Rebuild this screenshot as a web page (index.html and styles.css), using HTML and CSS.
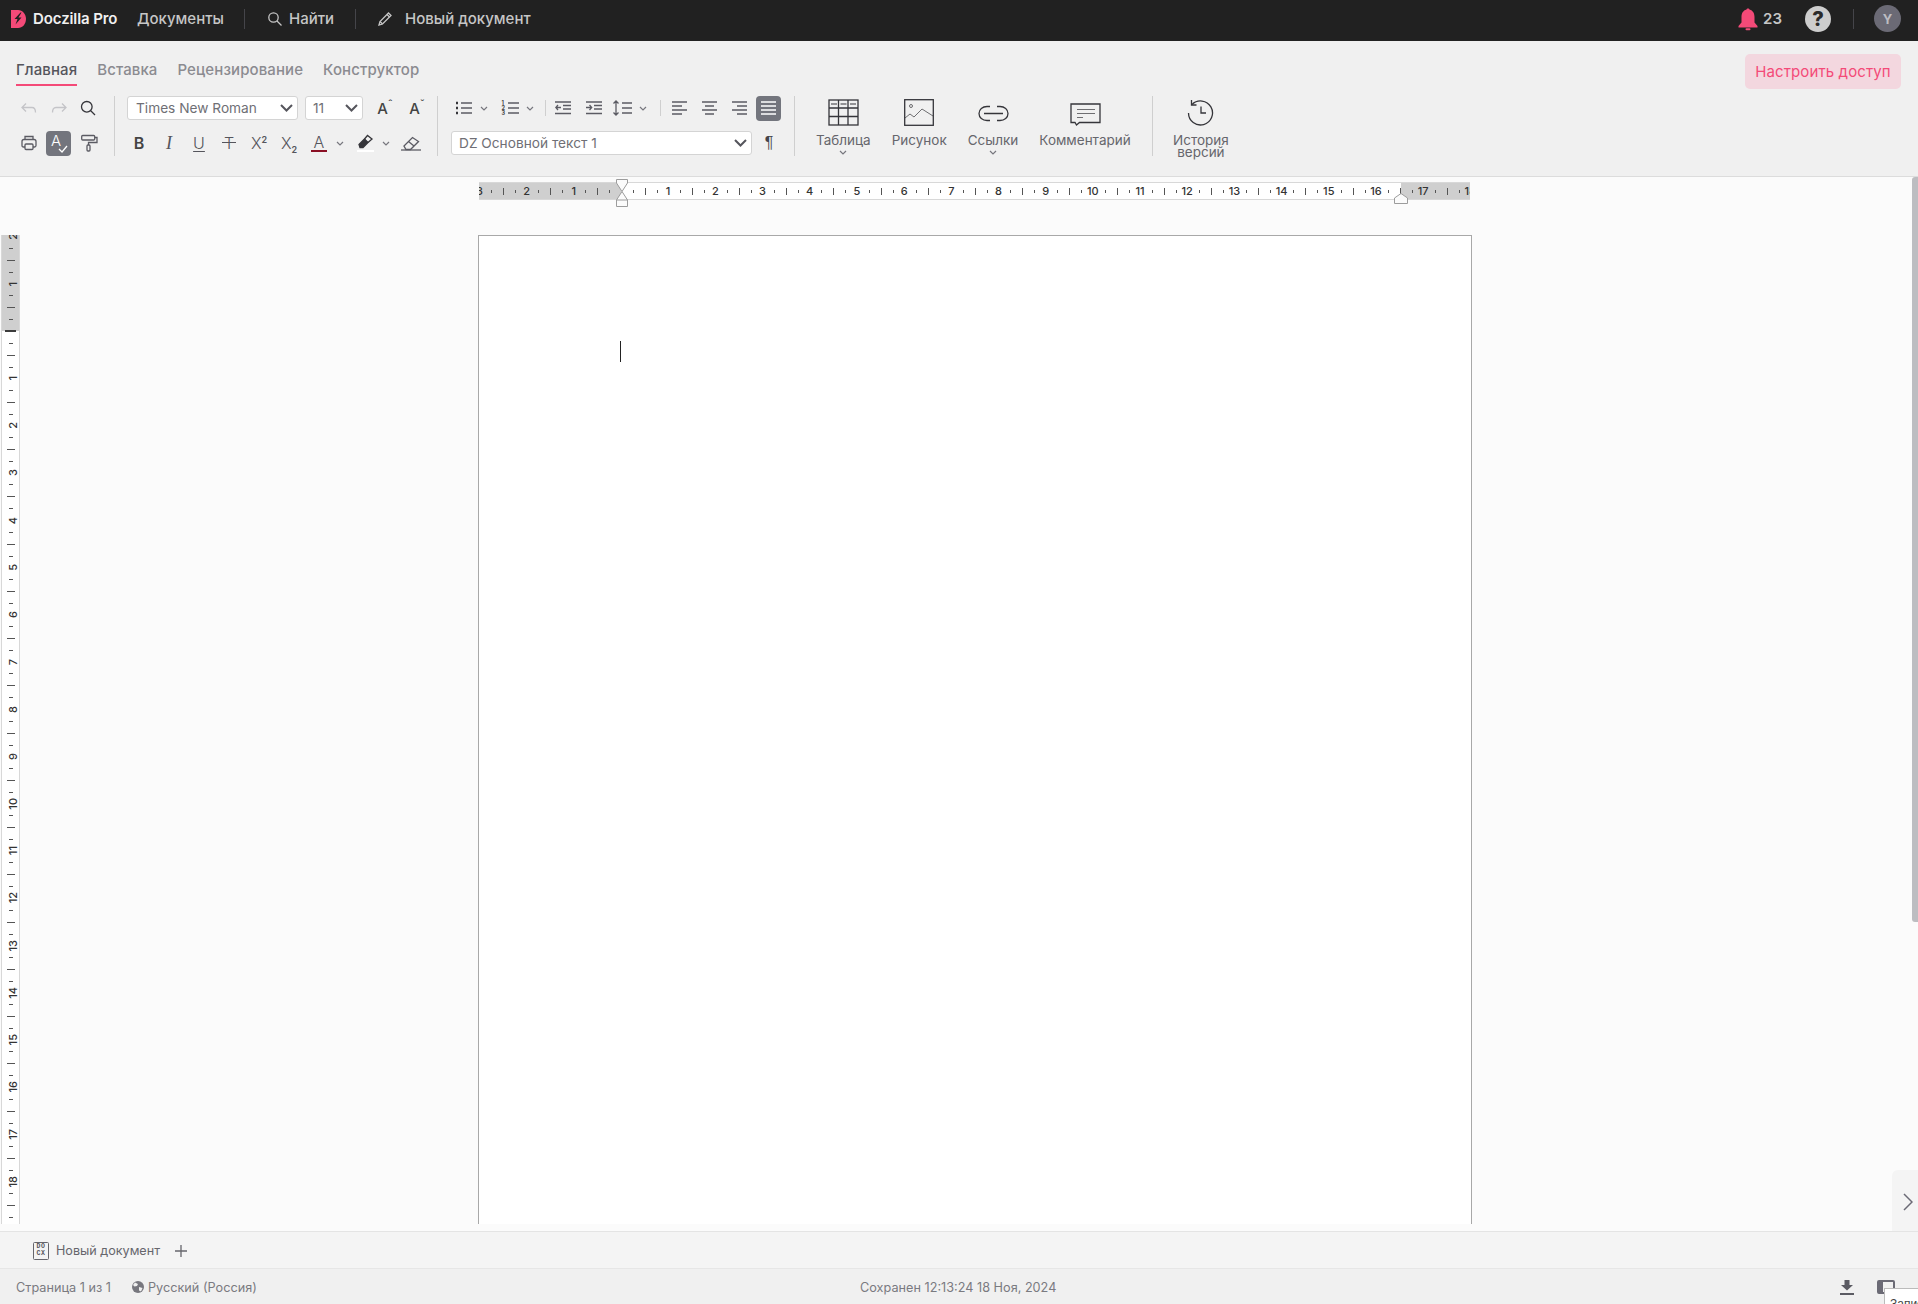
FILE: index.html
```html
<!DOCTYPE html>
<html lang="ru">
<head>
<meta charset="utf-8">
<title>Новый документ</title>
<link rel="stylesheet" href="styles.css">
</head>
<body>
<div class="app">
  <header class="topbar">
    <svg class="logo" width="15" height="18" viewBox="0 0 15 18"><path class="logo-d" d="M0 0H7C11.500 0 15 4 15 9S11.500 18 7 18H0Z"/><path class="logo-bolt" d="M9.500 2.500 3.500 9H6.500L4.500 14.500 10.500 7.500H7.500L10.500 2.500Z"/></svg>
    <span class="brand">Doczilla Pro</span>
    <span class="top-link docs">Документы</span>
    <span class="top-sep sep-a"></span>
    <svg class="top-search ic" width="16" height="16" viewBox="0 0 16 16"><circle cx="6.500" cy="6.500" r="4.700"/><path d="M10 10 14.500 14.500"/></svg>
    <span class="top-link find">Найти</span>
    <span class="top-sep sep-b"></span>
    <svg class="top-pencil ic" width="16" height="16" viewBox="0 0 16 16"><path d="M2 14 3 10.500 11.500 2 14 4.500 5.500 13Z"/><path d="M10 3.500 12.500 6M3 10.500 5.500 13"/></svg>
    <span class="top-link newdoc">Новый документ</span>
    <div class="top-right">
      <svg class="bell" width="20" height="24" viewBox="0 0 20 24"><path d="M8.500 2.500C8.500 1 11.500 1 11.500 2.500 15 3.500 16.500 6.500 16.500 10V15.500L19.500 19V20.500H.5V19L3.500 15.500V10C3.500 6.500 5 3.500 8.500 2.500Z"/><rect x="7.500" y="21.300" width="5" height="2" rx="1"/></svg>
      <span class="count">23</span>
      <span class="help">?</span>
      <span class="top-sep sep-c"></span>
      <span class="avatar">Y</span>
    </div>
  </header>

  <section class="ribbon">
    <div class="ribbon-head">
      <nav class="tabs">
        <span class="tab active">Главная</span>
        <span class="tab">Вставка</span>
        <span class="tab">Рецензирование</span>
        <span class="tab">Конструктор</span>
      </nav>
      <button class="share">Настроить доступ</button>
    </div>
    <div class="toolbar">
      <div class="group g1">
        <div class="row r-hist1">
          <span class="cell faint"><svg class="ic" width="16" height="12" viewBox="0 0 16 12"><path d="M5 1.500 1 5.500 5 9.500M1 5.500H11C13.500 5.500 14.500 7.500 14.500 10.500"/></svg></span>
          <span class="cell faint"><svg class="ic" width="16" height="12" viewBox="0 0 16 12"><path d="M11 1.500 15 5.500 11 9.500M15 5.500H5C2.500 5.500 1.500 7.500 1.500 10.500"/></svg></span>
          <span class="cell"><svg class="ic dark" width="16" height="16" viewBox="0 0 16 16"><circle cx="6.800" cy="6.800" r="5.300"/><path d="M10.500 10.500 15 15"/></svg></span>
        </div>
        <div class="row r-hist2">
          <span class="cell"><svg class="ic" width="16" height="16" viewBox="0 0 16 16"><path d="M4 4.500V1.500H12V4.500M4 12H2.500C1.500 12 1 11.500 1 10.500V6.500C1 5.500 1.500 4.500 3 4.500H13C14.500 4.500 15 5.500 15 6.500V10.500C15 11.500 14.500 12 13.500 12H12"/><rect x="4" y="9" width="8" height="5.500" rx="1"/></svg></span>
          <span class="cell"><span class="spell"><span class="spell-a">A</span><svg class="ic white" width="10" height="8" viewBox="0 0 10 8"><path d="M1 4 4 7 9 1"/></svg></span></span>
          <span class="cell"><svg class="ic" width="17" height="18" viewBox="0 0 17 18"><rect x=".7" y="1.500" width="13" height="4.500" rx="1"/><path d="M13.700 3.500H16V8.500H7.500V11"/><rect x="6" y="11" width="3" height="6" rx="1"/></svg></span>
        </div>
      </div>
      <span class="vsep"></span>
      <div class="group g2">
        <div class="row r-font">
          <span class="select font-select"><span class="sel-text">Times New Roman</span><svg class="ic sel-chev" width="13" height="8" viewBox="0 0 13 8"><path d="M1 1 6.500 6.500 12 1"/></svg></span>
          <span class="select size-select"><span class="sel-text">11</span><svg class="ic sel-chev" width="13" height="8" viewBox="0 0 13 8"><path d="M1 1 6.500 6.500 12 1"/></svg></span>
          <span class="cell grow"><span>A<small class="caret">ˆ</small></span></span>
          <span class="cell grow"><span>A<small class="caret">ˇ</small></span></span>
        </div>
        <div class="row r-format">
          <span class="cell fmt bold">B</span>
          <span class="cell fmt ital">I</span>
          <span class="cell fmt under">U</span>
          <span class="cell fmt strike">T</span>
          <span class="cell fmt thin"><span>X<sup>2</sup></span></span>
          <span class="cell fmt thin"><span>X<sub>2</sub></span></span>
          <span class="cell fmt thin"><span class="color-a">A</span></span>
          <span class="cell chev-pad"><svg class="ic chev" width="8" height="5" viewBox="0 0 8 5"><path d="M1 1 4 4 7 1"/></svg></span>
          <span class="cell"><svg class="ic dark" width="17" height="18" viewBox="0 0 17 18"><path class="fill" d="M2 10.500 7.500 5 11 8.500 6 13.500H3Z"/><path d="M7.500 5 10.500 1.500 15 5 11 8.500"/><path class="under-bar" d="M0 17H17"/></svg></span>
          <span class="cell"><svg class="ic chev" width="8" height="5" viewBox="0 0 8 5"><path d="M1 1 4 4 7 1"/></svg></span>
          <span class="cell"><svg class="ic" width="20" height="15" viewBox="0 0 20 15"><path d="M3 10 11.500 1.500 17.500 5.500 9.500 13.500H5Z"/><path d="M7.500 5.500 13 10"/><path d="M0 14H20"/></svg></span>
        </div>
      </div>
      <span class="vsep"></span>
      <div class="group g3">
        <div class="row r-para">
          <span class="cell"><svg class="ic" width="17" height="14" viewBox="0 0 17 14"><path class="dots" d="M1 2H3M1 7H3M1 12H3"/><path d="M6 2H17M6 7H17M6 12H17"/></svg></span>
          <span class="cell chev-pad2"><svg class="ic chev" width="8" height="5" viewBox="0 0 8 5"><path d="M1 1 4 4 7 1"/></svg></span>
          <span class="cell"><span class="numlist"><span class="nums">1<br>2<br>3</span><svg class="ic" width="11" height="14" viewBox="0 0 11 14"><path d="M0 2H11M0 7H11M0 12H11"/></svg></span></span>
          <span class="cell"><svg class="ic chev" width="8" height="5" viewBox="0 0 8 5"><path d="M1 1 4 4 7 1"/></svg></span>
          <span class="cell"><span class="mini-sep"></span></span>
          <span class="cell"><svg class="ic" width="16" height="14" viewBox="0 0 16 14"><path d="M0 1H16M8 4.500H16M8 8H16M0 12.500H16M6 6.500H1M3 4 .8 6.500 3 9"/></svg></span>
          <span class="cell"><svg class="ic" width="16" height="14" viewBox="0 0 16 14"><path d="M0 1H16M8 4.500H16M8 8H16M0 12.500H16M0 6.500H5.500M3.500 4 5.700 6.500 3.500 9"/></svg></span>
          <span class="cell"><svg class="ic" width="19" height="16" viewBox="0 0 19 16"><path d="M3 1V15M.5 3.500 3 1 5.500 3.500M.5 12.500 3 15 5.500 12.500M9 3H19M9 8H19M9 13H19"/></svg></span>
          <span class="cell"><svg class="ic chev" width="8" height="5" viewBox="0 0 8 5"><path d="M1 1 4 4 7 1"/></svg></span>
          <span class="cell"><span class="mini-sep"></span></span>
          <span class="cell"><svg class="ic" width="15" height="14" viewBox="0 0 15 14"><path d="M0 1H15M0 5H10M0 9H15M0 13H10"/></svg></span>
          <span class="cell"><svg class="ic" width="15" height="14" viewBox="0 0 15 14"><path d="M0 1H15M3 5H12M0 9H15M3 13H12"/></svg></span>
          <span class="cell"><svg class="ic" width="15" height="14" viewBox="0 0 15 14"><path d="M0 1H15M5 5H15M0 9H15M5 13H15"/></svg></span>
          <span class="cell"><span class="justify"><svg class="ic white" width="15" height="14" viewBox="0 0 15 14"><path d="M0 1H15M0 5H15M0 9H15M0 13H15"/></svg></span></span>
        </div>
        <div class="row r-style">
          <span class="select style-select"><span class="sel-text">DZ Основной текст 1</span><svg class="ic sel-chev" width="13" height="8" viewBox="0 0 13 8"><path d="M1 1 6.500 6.500 12 1"/></svg></span>
          <span class="cell pilcrow">¶</span>
        </div>
      </div>
      <span class="vsep"></span>
      <div class="group g4">
        <div class="large">
          <span class="large-ic"><svg class="ic dark" width="31" height="27" viewBox="0 0 31 27"><rect x="1" y="1" width="29" height="25"/><path d="M1 9H30M1 17.500H30M10.500 1V26M20 1V26"/><path class="thin-light" d="M3 5H9M12.500 5H18.500M22 5H28"/></svg></span>
          <span class="large-label">Таблица</span>
          <svg class="ic chev" width="8" height="5" viewBox="0 0 8 5"><path d="M1 1 4 4 7 1"/></svg>
        </div>
        <div class="large">
          <span class="large-ic"><svg class="ic dark" width="30" height="27" viewBox="0 0 30 27"><rect x=".7" y=".7" width="28.600" height="25.600"/><path class="hair" d="M1 19 6 15 10 18 18 10 29 17"/><circle class="hair" cx="7" cy="7" r="1.500"/></svg></span>
          <span class="large-label">Рисунок</span>
        </div>
        <div class="large">
          <span class="large-ic"><svg class="ic dark link-ic" width="31" height="17" viewBox="0 0 31 17"><path d="M12 1.500H9C4.500 1.500 1 4.500 1 8.500S4.500 15.500 9 15.500H12M19 1.500H22C26.500 1.500 30 4.500 30 8.500S26.500 15.500 22 15.500H19M6 8.500H25"/></svg></span>
          <span class="large-label">Ссылки</span>
          <svg class="ic chev" width="8" height="5" viewBox="0 0 8 5"><path d="M1 1 4 4 7 1"/></svg>
        </div>
        <div class="large">
          <span class="large-ic"><svg class="ic dark" width="31" height="23" viewBox="0 0 31 23"><path d="M1 1H30V19.500H9.500L6.500 22 5 19.500H1Z"/><path class="hair" d="M7 6.500H25M7 10.500H25M7 14.500H13"/></svg></span>
          <span class="large-label">Комментарий</span>
        </div>
      </div>
      <span class="vsep"></span>
      <div class="group g5">
        <div class="large">
          <span class="large-ic"><svg class="ic dark" width="27" height="27" viewBox="0 0 27 27"><path d="M5 5.500A12 12 0 1 1 1.500 14"/><path d="M4.500 1V6H9.500"/><path d="M14 7.500V14H19"/></svg></span>
          <span class="large-label two-line">История<br>версий</span>
        </div>
      </div>
    </div>
  </section>

  <main class="workspace">
    <div class="hruler">
      <div class="hruler-track">
        <span class="hnum">3</span><span class="hnum">2</span><span class="hnum">1</span><span class="hnum"></span>
        <span class="hnum">1</span><span class="hnum">2</span><span class="hnum">3</span><span class="hnum">4</span><span class="hnum">5</span><span class="hnum">6</span><span class="hnum">7</span><span class="hnum">8</span><span class="hnum">9</span><span class="hnum">10</span><span class="hnum">11</span><span class="hnum">12</span><span class="hnum">13</span><span class="hnum">14</span><span class="hnum">15</span><span class="hnum">16</span><span class="hnum">17</span><span class="hnum">18</span>
      </div>
      <svg class="marker-left" width="14" height="28" viewBox="0 0 14 28"><path d="M1.500 .5H12.500V4L7 12.500 1.500 4Z"/><path d="M7 12.500 12.500 21V27.500H1.500V21Z"/><path d="M1.500 21H12.500"/></svg>
      <svg class="marker-right" width="14" height="11" viewBox="0 0 14 11"><path d="M.5 10.500V5L7 .5 13.500 5V10.500Z"/></svg>
    </div>
    <div class="doc-row">
      <div class="vruler">
        <span class="vnum"><b>2</b></span><span class="vnum"><b>1</b></span><span class="vnum"><i class="zero"></i></span>
        <span class="vnum"><b>1</b></span><span class="vnum"><b>2</b></span><span class="vnum"><b>3</b></span><span class="vnum"><b>4</b></span><span class="vnum"><b>5</b></span><span class="vnum"><b>6</b></span><span class="vnum"><b>7</b></span><span class="vnum"><b>8</b></span><span class="vnum"><b>9</b></span><span class="vnum"><b>10</b></span><span class="vnum"><b>11</b></span><span class="vnum"><b>12</b></span><span class="vnum"><b>13</b></span><span class="vnum"><b>14</b></span><span class="vnum"><b>15</b></span><span class="vnum"><b>16</b></span><span class="vnum"><b>17</b></span><span class="vnum"><b>18</b></span>
      </div>
      <div class="page"><span class="caret-line"></span></div>
    </div>
    <span class="scrollbar"></span>
    <span class="side-tab"><svg class="ic side-chev" width="10" height="18" viewBox="0 0 10 18"><path d="M1 1 9 9 1 17"/></svg></span>
  </main>

  <div class="doc-tabs">
    <span class="docx"><span>DO</span><span>CX</span></span>
    <span class="doc-name">Новый документ</span>
    <svg class="ic plus" width="12" height="12" viewBox="0 0 12 12"><path d="M6 0V12M0 6H12"/></svg>
  </div>

  <footer class="status">
    <span class="pages">Страница 1 из 1</span>
    <svg class="globe" width="12" height="12" viewBox="0 0 12 12"><circle cx="6" cy="6" r="6"/><path class="globe-land" d="M3 1.500 6 3 5 5 2.500 5.500 1 4ZM7 6 10.500 7 9 10.500 7 9.500Z"/></svg>
    <span class="lang">Русский (Россия)</span>
    <span class="saved">Сохранен 12:13:24 18 Ноя, 2024</span>
    <svg class="download" width="14" height="15" viewBox="0 0 14 15"><path d="M4.500 0H9.500V5H13L7 10.500 1 5H4.500Z"/><rect x="0" y="13" width="14" height="2"/></svg>
    <span class="layout-ic"></span>
    <span class="tooltip">Запись</span>
  </footer>
</div>
</body>
</html>
```
FILE: styles.css
```css
* { box-sizing: border-box; }
html, body { margin: 0; height: 100%; overflow: hidden; }
body { font-family: Inter, "Noto Sans", sans-serif; color: #666; background: #fbfbfb; }
.app { display: flex; flex-direction: column; height: 1304px; position: relative; overflow: hidden; }

/* generic icon */
.ic { fill: none; stroke: #5b5b63; stroke-width: 1.300; display: block; }
.ic.dark { stroke: #35353a; }
.ic.white { stroke: #fff; }
.ic.chev { stroke: #77777e; stroke-width: 1.200; }
.ic .fill { fill: #35353a; }
.ic .hair { stroke-width: .7; }
.ic .thin-light { stroke-width: 1; stroke: #35353a; }
.ic .under-bar { stroke: #fff; stroke-width: 2; }
.ic .dots { stroke-width: 2.400; stroke: #35353a; }
.faint .ic { stroke: #c4c4c8; }

/* top bar */
.topbar { height: 41px; flex: none; background: #212121; display: flex; align-items: center; padding-bottom: 4px; color: #ccc; font-size: 15px; font-weight: 500; }
.logo { margin-left: 11px; margin-top: 1px; flex: none; }
.logo-d { fill: #f44a78; }
.logo-bolt { fill: #212121; }
.brand { margin-left: 7px; width: 85px; color: #f0f0f0; font-weight: 600; font-size: 15px; letter-spacing: -.1px; white-space: nowrap; flex: none; }
.top-link { color: #c6c6c6; white-space: nowrap; flex: none; }
.docs { margin-left: 19px; width: 85px; }
.top-sep { width: 1px; height: 20px; background: #45454a; flex: none; }
.sep-a { margin-left: 22px; }
.top-search { margin-left: 22px; stroke: #c6c6c6; flex: none; }
.find { margin-left: 6px; width: 45px; }
.sep-b { margin-left: 21px; }
.top-pencil { margin-left: 21px; stroke: #c6c6c6; flex: none; }
.newdoc { margin-left: 12px; }
.top-right { margin-left: auto; display: flex; align-items: center; padding-right: 17px; margin-top: 4px; }
.bell { fill: #f44a78; margin-top: -4px; }
.count { margin-left: 5px; margin-top: -4px; color: #c6c6c6; font-size: 15px; font-weight: 600; }
.help { width: 26px; height: 26px; margin-left: 23px; margin-top: -3px; border-radius: 50%; background: #cdcdcd; color: #2a2a2a; font-size: 20px; font-weight: 800; display: flex; align-items: center; justify-content: center; }
.sep-c { margin-left: 22px; margin-top: -4px; }
.avatar { width: 27px; height: 27px; margin-left: 20px; margin-top: -4px; border-radius: 50%; background: #6b6a75; color: #bdbdc2; font-size: 13px; font-weight: 700; display: flex; align-items: center; justify-content: center; }

/* ribbon */
.ribbon { height: 136px; flex: none; background: #f0f0f0; border-bottom: 1px solid #dcdcdc; padding-top: 13px; }
.ribbon-head { height: 35px; display: flex; justify-content: space-between; padding: 0 17px 0 16px; }
.tabs { display: flex; gap: 20px; margin-top: 4px; align-items: flex-start; }
.tab { font-size: 15px; font-weight: 500; line-height: 24px; height: 28px; color: #8b8b90; white-space: nowrap; letter-spacing: .1px; }
.tab.active { color: #55555c; border-bottom: 2px solid #f44a78; }
.share { width: 156px; height: 35px; border: 0; border-radius: 5px; background: #f3d7df; color: #f44a78; font: 400 15px Inter, sans-serif; letter-spacing: .12px; padding: 0; white-space: nowrap; }

.toolbar { display: flex; margin-top: 7px; height: 60px; }
.vsep { width: 1px; height: 60px; background: #cfcfcf; flex: none; }
.group { display: flex; flex-direction: column; gap: 11px; flex: none; }
.row { display: grid; height: 24px; align-items: center; }
.cell { display: flex; align-items: center; justify-content: center; height: 24px; }

.g1 { width: 114px; padding-left: 14px; }
.r-hist1 { grid-template-columns: 29px 32px 26px; }
.r-hist2 { grid-template-columns: 29px 31px 30px; }
.spell { width: 25px; height: 25px; border-radius: 4px; background: #73757d; display: block; position: relative; }
.spell-a { position: absolute; left: 5px; top: 1px; color: #fff; font-size: 15px; font-weight: 300; line-height: 18px; }
.spell .ic { position: absolute; right: 3px; bottom: 3px; }

.g2 { width: 322px; padding-left: 8px; }
.r-font { padding-left: 4px; grid-template-columns: 171px 65px 38px 26px; }
.select { display: flex; align-items: center; justify-content: space-between; height: 24px; background: #fff; border: 1px solid #d4d4d4; border-radius: 3px; font-size: 13.700px; color: #6f6f75; padding: 0 4px 0 8px; white-space: nowrap; }
.sel-chev { stroke: #55555c; stroke-width: 2; }
.size-select { margin-left: 7px; width: 58px; padding-left: 7px; }
.font-select { width: 171px; }
.grow { font-size: 15px; color: #444; font-weight: 500; padding-left: 6px; }
.caret { font-size: 11px; line-height: 0; vertical-align: 6px; margin-left: 0; }
.r-format { margin-left: 1px; grid-template-columns: repeat(7, 30px) 16px 30px 12px 38px; }
.fmt { font-size: 16px; color: #55555c; font-weight: 400; }
.fmt.thin { font-weight: 300; }
.fmt sup, .fmt sub { font-size: 9px; line-height: 0; font-weight: 600; }
.bold { font-weight: 600; color: #444; }
.ital { font: italic 18px "Liberation Serif", serif; }
.under { text-decoration: underline; text-decoration-thickness: 1px; text-underline-offset: 2px; font-weight: 300; }
.strike { position: relative; font-weight: 300; }
.strike::after { content: ""; position: absolute; left: 8px; right: 8px; top: 11px; height: 1px; background: #55555c; }
.color-a { border-bottom: 2.500px solid #8a0f24; line-height: 16px; padding: 0 3px; }
.chev-pad { padding-right: 4px; }
.chev-pad2 { padding-right: 8px; }

.g3 { width: 356px; padding-left: 13px; }
.r-para { grid-template-columns: 25px 24px 20px 20px 10px 26px 36px 20px 22px 12px 26px 34px 26px 33px; }
.mini-sep { width: 1px; height: 16px; background: #cfcfcf; }
.numlist { display: flex; align-items: center; gap: 2px; }
.nums { font-size: 5.500px; line-height: 5px; font-weight: 700; color: #444; width: 4px; }
.justify { width: 25px; height: 25px; border-radius: 4px; background: #73757d; display: flex; align-items: center; justify-content: center; }
.r-style { grid-template-columns: 301px 34px; }
.style-select { width: 301px; padding-left: 7px; }
.pilcrow { font: 16px "Liberation Sans", sans-serif; color: #44444a; }

.g4 { width: 357px; padding-left: 21px; flex-direction: row; gap: 21px; }
.g5 { padding-left: 20px; flex-direction: row; }
.large { display: flex; flex-direction: column; align-items: center; flex: none; }
.large-ic { height: 30px; flex: none; display: flex; align-items: flex-end; margin-bottom: 8px; }
.large-label { font-size: 13.500px; line-height: 13px; color: #66666c; white-space: nowrap; text-align: center; margin-bottom: 3px; flex: none; }
.link-ic { margin-bottom: 4px; }
.two-line { line-height: 12px; }

/* workspace */
.workspace { flex: 1; min-height: 0; position: relative; background: #fbfbfb; padding: 5px 0 7px; display: flex; flex-direction: column; }
.hruler { position: relative; height: 18px; width: 991px; margin-left: 479px; flex: none; }
.hruler-track { height: 18px; overflow: hidden; display: flex;
  background:
    repeating-linear-gradient(90deg, transparent 0 12px, #555 12px 13px, transparent 13px 36px, #555 36px 37px, transparent 37px 47.200px) center / 100% 3px no-repeat,
    repeating-linear-gradient(90deg, transparent 0 24px, #555 24px 25px, transparent 25px 47.200px) center / 100% 7px no-repeat,
    linear-gradient(90deg, #cfcfcf 142px, #fff 142px 922px, #cfcfcf 922px);
  border-top: 1px solid #d8d8d8; border-bottom: 1px solid #d8d8d8; }
.hnum { flex: 0 0 47.200px; font-size: 11px; line-height: 16px; text-align: center; color: #333; font-weight: 500; }
.hnum:first-child { margin-left: -23.200px; }
.marker-left { position: absolute; left: 136px; top: -3px; fill: #fbfbfb; stroke: #9c9c9c; }
.marker-right { position: absolute; left: 915px; top: 11px; fill: #fbfbfb; stroke: #9c9c9c; }

.doc-row { flex: 1; min-height: 0; display: flex; margin-top: 35px; }
.vruler { width: 19px; margin-left: 1px; flex: none; overflow: hidden; display: flex; flex-direction: column; height: 100%;
  background:
    repeating-linear-gradient(180deg, transparent 0 13px, #555 13px 14px, transparent 14px 37px, #555 37px 38px, transparent 38px 47.250px) center / 4px 100% no-repeat,
    repeating-linear-gradient(180deg, transparent 0 25px, #555 25px 26px, transparent 26px 47.250px) center / 8px 100% no-repeat,
    linear-gradient(180deg, #cfcfcf 96px, #fff 96px);
  border-left: 1px solid #d8d8d8; border-right: 1px solid #d8d8d8; }
.vnum { flex: 0 0 47.250px; display: flex; align-items: center; justify-content: center; }
.vnum:first-child { margin-top: -22px; }
.vnum b { writing-mode: vertical-rl; transform: rotate(180deg); font-size: 11px; line-height: 11px; color: #333; font-weight: 500; margin-left: 5px; }
.zero { display: block; width: 11px; height: 1.500px; background: #3c3c3c; }
.page { margin-left: 458px; width: 994px; background: #fff; border: 1px solid #a8a8a8; border-bottom: 0; padding: 105px 0 0 141px; flex: none; }
.caret-line { display: block; width: 1px; height: 21px; background: #222; }
.scrollbar { position: absolute; right: 0; top: 0; width: 6px; height: 745px; background: #bdbdc1; border-radius: 3px 0 0 3px; }
.side-tab { position: absolute; right: 0; bottom: 0; width: 26px; height: 61px; background: #f4f4f4; border-top-left-radius: 6px; display: flex; align-items: center; justify-content: flex-end; padding: 2px 5px 0 0; }
.side-chev { stroke: #6b6a75; stroke-width: 1.500; }

/* document tabs */
.doc-tabs { height: 38px; flex: none; background: #f4f4f4; border-top: 1px solid #e4e4e4; border-bottom: 1px solid #e6e6e6; display: flex; align-items: center; padding: 1px 0 0 33px; }
.docx { width: 16px; height: 18px; border: 1px solid #66666c; border-radius: 1.500px; display: flex; flex-direction: column; align-items: center; justify-content: center; font: 700 6.500px/6.500px "Liberation Mono", monospace; letter-spacing: .6px; color: #55555c; }
.doc-name { margin-left: 7px; font-size: 12.600px; color: #66666c; white-space: nowrap; }
.plus { margin-left: 15px; stroke: #66666c; }

/* status bar */
.status { height: 35px; flex: none; background: #f0f0f0; display: flex; align-items: center; padding: 1px 0 0 16px; font-size: 12.700px; color: #7a7a80; position: relative; overflow: hidden; }
.pages { width: 116px; white-space: nowrap; flex: none; }
.globe { fill: #77777e; flex: none; }
.globe-land { fill: #f0f0f0; }
.lang { margin-left: 4px; white-space: nowrap; width: 712px; flex: none; }
.saved { white-space: nowrap; width: 980px; flex: none; }
.download { fill: #5b5b63; flex: none; }
.layout-ic { width: 18px; height: 14px; margin-left: 23px; border: 4px solid #6b6a75; border-width: 2px 2px 2px 6px; border-radius: 2px; flex: none; }
.tooltip { position: absolute; left: 1884px; top: 19px; width: 60px; height: 30px; background: #fff; border: 1px solid #bbb; font: 12px/16px "Liberation Sans", sans-serif; color: #444; padding: 7px 0 0 5px; overflow: hidden; white-space: nowrap; }
```
